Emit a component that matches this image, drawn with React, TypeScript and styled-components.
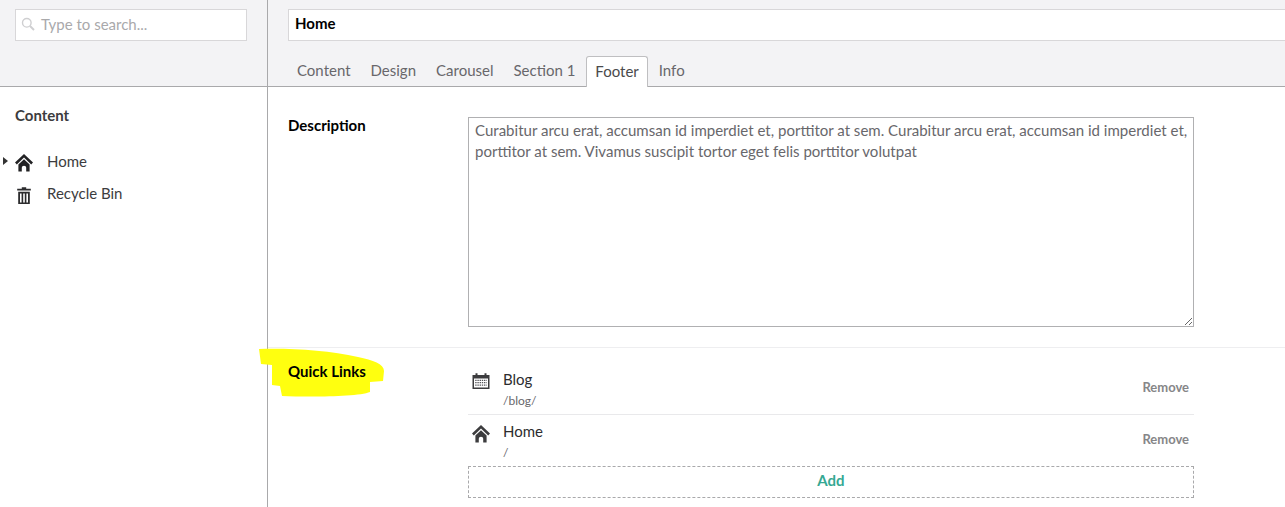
import React from "react";
import styled, { createGlobalStyle } from "styled-components";

const Global = createGlobalStyle`
  html, body { margin: 0; padding: 0; background: #fff; overflow: hidden; }
  body { font-family: Lato, "Open Sans", sans-serif; color: #1b264f; }
  * { box-sizing: border-box; }
`;

const Page = styled.div`
  position: relative;
  display: grid;
  grid-template-columns: 268px 1fr;
  grid-template-rows: 87px 420px;
  width: 1285px;
  height: 507px;
  overflow: hidden;
`;

const SideHead = styled.div`
  background: #f3f3f5;
  border-bottom: 1px solid #a9a9ab;
  border-right: 1px solid #a9a9ab;
  padding: 9px 20px 0 15px;
`;

const SearchBox = styled.div`
  display: flex;
  align-items: center;
  gap: 6px;
  height: 32px;
  background: #fff;
  border: 1px solid #d8d7d9;
  padding: 0 0 3px 5px;
  font-size: 15px;
  color: #a9a9ab;
`;

const MainHead = styled.div`
  background: #f3f3f5;
  border-bottom: 1px solid #a9a9ab;
  padding: 9px 0 0 20px;
  display: flex;
  flex-direction: column;
`;

const NameInput = styled.div`
  flex: none;
  height: 32px;
  margin-right: -10px;
  background: #fff;
  border: 1px solid #d8d7d9;
  padding-left: 6px;
  font-size: 15px;
  font-weight: 700;
  line-height: 26px;
  color: #000;
`;

const Tabs = styled.div`
  display: flex;
  flex: none;
  margin-top: 15px;
  height: 31px;
`;

const Tab = styled.div<{ $active?: boolean }>`
  height: 31px;
  padding: 0 ${(p) => (p.$active ? "8px" : "9px")};
  margin-right: 2px;
  font-size: 15px;
  line-height: 29px;
  color: ${(p) => (p.$active ? "#4a4a4c" : "#68676b")};
  ${(p) =>
    p.$active
      ? `background:#fff;border:1px solid #bfbfc1;border-bottom:0;border-radius:3px 3px 0 0;position:relative;`
      : ""}
`;

const Sidebar = styled.div`
  border-right: 1px solid #a9a9ab;
  padding-top: 19px;
`;

const SideTitle = styled.div`
  margin-left: 15px;
  font-size: 15px;
  font-weight: 700;
  line-height: 18px;
  color: #3c3c3e;
`;

const Tree = styled.div`
  margin-top: 26px;
  display: flex;
  flex-direction: column;
  gap: 10px;
`;

const TreeRow = styled.div`
  display: flex;
  align-items: center;
  height: 22px;
  font-size: 15px;
  color: #3c3c3e;
`;

const Caret = styled.span<{ $hidden?: boolean }>`
  flex: none;
  width: 0;
  height: 0;
  margin: 0 0 0 3px;
  border-left: 5px solid ${(p) => (p.$hidden ? "transparent" : "#333")};
  border-top: 4px solid transparent;
  border-bottom: 4px solid transparent;
`;

const TreeIcon = styled.span`
  display: flex;
  justify-content: center;
  width: 18px;
  margin: 4px 14px 0 7px;
`;

const Main = styled.div`
  min-width: 0;
`;

const Row = styled.div<{ $last?: boolean }>`
  display: grid;
  grid-template-columns: 180px 726px;
  padding: ${(p) => (p.$last ? "18px 0 0 20px" : "30px 0 20px 20px")};
  border-bottom: ${(p) => (p.$last ? "0" : "1px solid #eeeef0")};
`;

const Label = styled.div<{ $last?: boolean }>`
  font-size: 15px;
  font-weight: 700;
  line-height: 18px;
  margin-top: ${(p) => (p.$last ? "-4px" : "-1px")};
  color: #000;
  position: relative;
  z-index: 1;
`;

const Area = styled.textarea`
  display: block;
  width: 726px;
  height: 210px;
  padding: 2px 2px 2px 6px;
  border: 1px solid #b0b0b2;
  border-radius: 0;
  outline: none;
  font-family: Lato, sans-serif;
  font-size: 15.04px;
  line-height: 21px;
  color: #68676b;
  resize: vertical;
`;

const LinkRow = styled.div<{ $last?: boolean }>`
  display: flex;
  height: ${(p) => (p.$last ? "51px" : "49px")};
  padding-top: ${(p) => (p.$last ? "7px" : "4px")};
  border-bottom: ${(p) => (p.$last ? "0" : "1px solid #e9e9eb")};
`;

const LinkIcon = styled.span`
  display: flex;
  justify-content: center;
  width: 24px;
  margin: 3px 10px 0 1px;
  height: 18px;
`;

const LinkText = styled.div`
  flex: 1;
`;

const LinkName = styled.div`
  font-size: 15px;
  line-height: 18px;
  color: #2c2c2e;
`;

const LinkUrl = styled.div`
  margin-top: 5px;
  font-size: 12px;
  line-height: 15px;
  color: #68676b;
`;

const Remove = styled.div`
  margin: 9px 5px 0 0;
  font-size: 13px;
  font-weight: 700;
  line-height: 16px;
  color: #868688;
`;

const AddBox = styled.div`
  height: 32px;
  border: 1px dashed #a9a9ab;
  text-align: center;
  font-size: 15px;
  font-weight: 700;
  line-height: 26px;
  color: #35a893;
`;

const Scribble = styled.svg`
  position: absolute;
  left: 258px;
  top: 347px;
  pointer-events: none;
`;

const SearchIcon = () => (
  <svg width="14" height="14" viewBox="0 0 14 14" fill="none">
    <circle cx="5.8" cy="5.8" r="4.3" stroke="#cfcfd1" strokeWidth="1.4" />
    <path d="M9 9l4 4" stroke="#cfcfd1" strokeWidth="2" />
  </svg>
);

const HomeIcon = ({ c }: { c: string }) => (
  <svg width="18" height="18" viewBox="0 0 18 18">
    <path
      fill={c}
      d="M9 0 L18 8.6 L16.2 10.4 L9 3.6 L1.8 10.4 L0 8.6 Z M3.4 10.4 L9 5.2 L14.6 10.4 V17.5 H11.2 V13.4 Q11.2 11.8 9 11.8 Q6.8 11.8 6.8 13.4 V17.5 H3.4 Z"
    />
  </svg>
);

const TrashIcon = () => (
  <svg width="14" height="17" viewBox="0 0 14 17">
    <path
      fill="#2c2c2e"
      fillRule="evenodd"
      d="M4.8 0.3 H9.2 V1.8 H13.8 V3.6 H0.2 V1.8 H4.8 Z M1.2 4.8 H12.8 V17 H1.2 Z M3 6.6 V15.4 H4.6 V6.6 Z M6.2 6.6 V15.4 H7.8 V6.6 Z M9.4 6.6 V15.4 H11 V6.6 Z"
    />
  </svg>
);

const CalendarIcon = () => (
  <svg width="18" height="17" viewBox="0 0 18 17">
    <path
      fill="#3c3c3e"
      fillRule="evenodd"
      d="M0.5 2 H3.5 V0.3 H5.5 V2 H12.5 V0.3 H14.5 V2 H17.5 V16 H0.5 Z M2 5.5 V14.6 H16 V5.5 Z"
    />
    <path
      stroke="#55555a"
      strokeWidth="1.3"
      strokeDasharray="1.4 0.8"
      d="M3.2 7.3 H14.8 M3.2 9.7 H14.8 M3.2 12.1 H14.8"
    />
  </svg>
);

export default function App() {
  return (
    <Page>
      <Global />
      <SideHead>
        <SearchBox>
          <SearchIcon />
          <span>Type to search...</span>
        </SearchBox>
      </SideHead>
      <MainHead>
        <NameInput>Home</NameInput>
        <Tabs>
          <Tab>Content</Tab>
          <Tab>Design</Tab>
          <Tab>Carousel</Tab>
          <Tab>Section 1</Tab>
          <Tab $active>Footer</Tab>
          <Tab>Info</Tab>
        </Tabs>
      </MainHead>
      <Sidebar>
        <SideTitle>Content</SideTitle>
        <Tree>
          <TreeRow>
            <Caret />
            <TreeIcon>
              <HomeIcon c="#222224" />
            </TreeIcon>
            Home
          </TreeRow>
          <TreeRow>
            <Caret $hidden />
            <TreeIcon>
              <TrashIcon />
            </TreeIcon>
            Recycle Bin
          </TreeRow>
        </Tree>
      </Sidebar>
      <Main>
        <Row>
          <Label>Description</Label>
          <Area
            readOnly
            defaultValue="Curabitur arcu erat, accumsan id imperdiet et, porttitor at sem. Curabitur arcu erat, accumsan id imperdiet et, porttitor at sem. Vivamus suscipit tortor eget felis porttitor volutpat"
          />
        </Row>
        <Row $last>
          <Label $last>Quick Links</Label>
          <div>
            <LinkRow>
              <LinkIcon>
                <CalendarIcon />
              </LinkIcon>
              <LinkText>
                <LinkName>Blog</LinkName>
                <LinkUrl>/blog/</LinkUrl>
              </LinkText>
              <Remove>Remove</Remove>
            </LinkRow>
            <LinkRow $last>
              <LinkIcon>
                <HomeIcon c="#3c3c3e" />
              </LinkIcon>
              <LinkText>
                <LinkName>Home</LinkName>
                <LinkUrl>/</LinkUrl>
              </LinkText>
              <Remove>Remove</Remove>
            </LinkRow>
            <AddBox>Add</AddBox>
          </div>
        </Row>
      </Main>
      <Scribble width="132" height="52" viewBox="0 0 132 52">
        <path
          fill="#ffff0f"
          d="M1 2 C30 1 70 3 100 10 C115 13 126 17 126 24 L125 34 L112 35 L112 45 C100 50 50 50 24 49 L22 39 L14 38 L14 18 L3 17 Z"
        />
      </Scribble>
    </Page>
  );
}
